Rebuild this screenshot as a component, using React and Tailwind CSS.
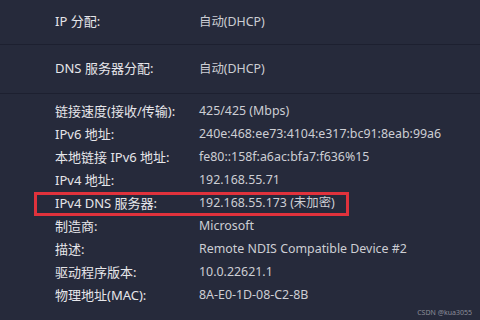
const details = [
  ["链接速度(接收/传输):", "425/425 (Mbps)"],
  ["IPv6 地址:", "240e:468:ee73:4104:e317:bc91:8eab:99a6"],
  ["本地链接 IPv6 地址:", "fe80::158f:a6ac:bfa7:f636%15"],
  ["IPv4 地址:", "192.168.55.71"],
  ["IPv4 DNS 服务器:", "192.168.55.173 (未加密)", true],
  ["制造商:", "Microsoft"],
  ["描述:", "Remote NDIS Compatible Device #2"],
  ["驱动程序版本:", "10.0.22621.1"],
  ["物理地址(MAC):", "8A-E0-1D-08-C2-8B"],
];

function Row({ label, value, boxed }) {
  return (
    <div className="relative flex h-[23px] items-center">
      {boxed && (
        <div className="absolute left-[34px] top-[0px] h-[24px] w-[315px] border-[3px] border-[#e0323c]" />
      )}
      <div className="w-[199px] pl-[55px] text-[#e6e6ea]">{label}</div>
      <div className="text-[12.4px] text-[#cdced4]">{value}</div>
    </div>
  );
}

export default function App() {
  return (
    <div
      className="relative h-[320px] w-[480px] overflow-hidden bg-[#262a3b] text-[13px]"
      style={{ fontFamily: '"Noto Sans", "Noto Sans CJK SC", sans-serif' }}
    >
      <div className="flex h-[45px] items-center border-b border-[#1d2030]">
        <div className="w-[199px] pl-[55px] text-[#e6e6ea]">IP 分配:</div>
        <div className="text-[12.4px] text-[#cdced4]">自动(DHCP)</div>
      </div>
      <div className="flex h-[49px] items-center border-b border-[#1d2030]">
        <div className="w-[199px] pl-[55px] text-[#e6e6ea]">DNS 服务器分配:</div>
        <div className="text-[12.4px] text-[#cdced4]">自动(DHCP)</div>
      </div>
      <div className="pt-[6px]">
        {details.map(([label, value, boxed]) => (
          <Row key={label} label={label} value={value} boxed={boxed} />
        ))}
      </div>
      <div className="absolute bottom-[2px] right-[8px] text-[7px] text-[#8a8c98]">
        CSDN @kua3055
      </div>
    </div>
  );
}
